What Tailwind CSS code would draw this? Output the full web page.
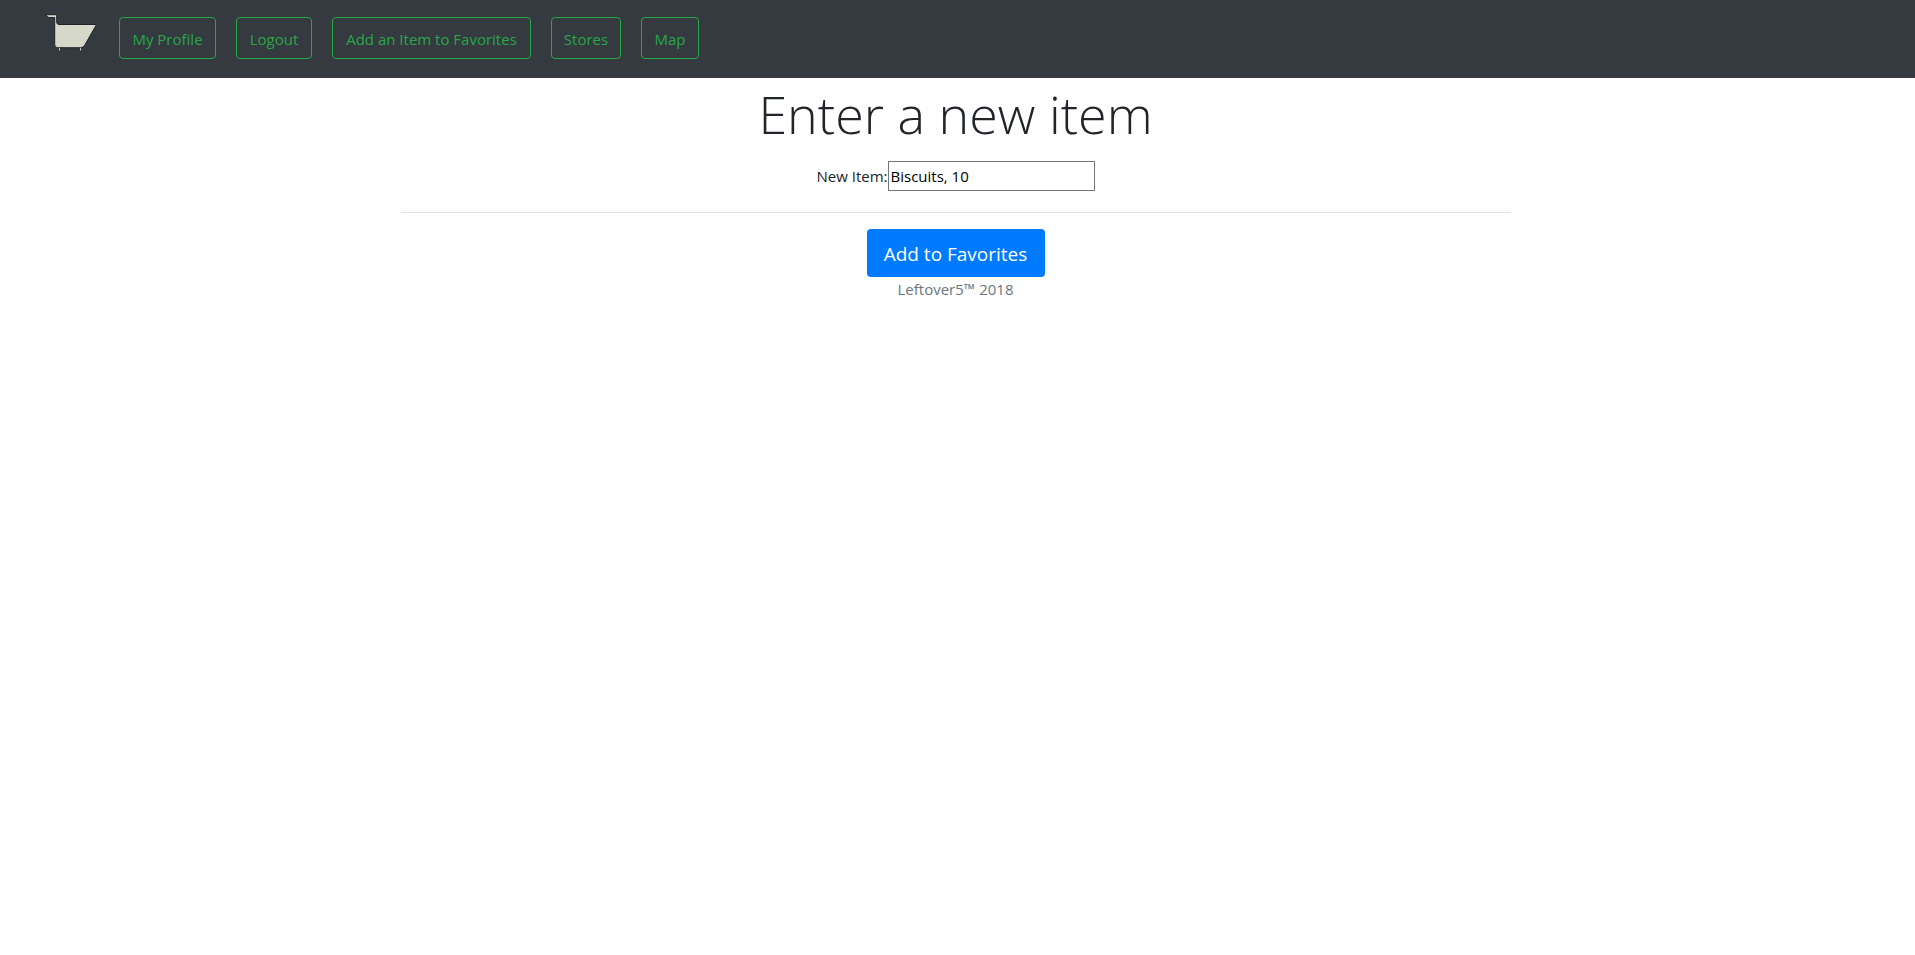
<!DOCTYPE html>
<html lang="en">
<head>
<meta charset="utf-8">
<title>Enter a new item</title>
<script src="https://cdn.jsdelivr.net/npm/@tailwindcss/browser@4"></script>
</head>
<body class="bg-white font-['Segoe_UI','Open_Sans','Noto_Sans',sans-serif] text-[15px] leading-6 text-[#212529]">
<nav class="flex h-[78px] items-start bg-[#343a40] pl-[45px] pt-[14px]">
  <a href="#" aria-label="Home" class="mr-5 block">
    <svg class="block h-10 w-[54px]" viewBox="0 0 54 40">
      <path d="M13.500 33V37H15.500V33M34.500 33V37H36.500V33" fill="#d6d8c9" stroke="#202327" stroke-width="0.800"/>
      <path d="M1 0.700H11.700V8.500Q12 10.500 14 10.500H51.500L39.500 31.500Q38 33.700 35.500 33.700H12.500Q9.700 33.700 9.700 30.500V3.500H4Q1.500 3 1 0.700Z" fill="#d6d8c9" stroke="#202327" stroke-width="1"/>
    </svg>
  </a>
  <div class="flex gap-5 pt-[3px] text-[#28a745]">
    <a href="#" class="flex h-[42px] min-w-[97px] items-center justify-center whitespace-nowrap rounded border border-[#28a745] px-2 pt-0.5">My Profile</a>
    <a href="#" class="flex h-[42px] min-w-[76px] items-center justify-center whitespace-nowrap rounded border border-[#28a745] px-2 pt-0.5">Logout</a>
    <a href="#" class="flex h-[42px] min-w-[199px] items-center justify-center whitespace-nowrap rounded border border-[#28a745] px-2 pt-0.5">Add an Item to Favorites</a>
    <a href="#" class="flex h-[42px] min-w-[70px] items-center justify-center whitespace-nowrap rounded border border-[#28a745] px-2 pt-0.5">Stores</a>
    <a href="#" class="flex h-[42px] min-w-[58px] items-center justify-center whitespace-nowrap rounded border border-[#28a745] px-2 pt-0.5">Map</a>
  </div>
</nav>
<div class="pr-1">
<main class="mx-auto max-w-[1140px] px-[15px]">
  <h1 class="text-center text-[52px] font-light leading-[71px]">Enter a new item</h1>
  <form>
    <div class="mt-3 flex items-center justify-center">
      <label for="item" class="min-w-[71px] whitespace-nowrap text-right">New Item:</label>
      <input id="item" type="text" value="Biscuits, 10" class="h-[30px] w-[207px] border border-[#767676] bg-white px-0.5 text-black">
    </div>
    <hr class="mt-[21px] mb-4 border-t border-[#e5e5e5]">
    <div class="flex justify-center">
      <button type="submit" class="h-12 min-w-[178px] whitespace-nowrap rounded bg-[#007bff] px-3 pt-0.5 text-[19px] text-white">Add to Favorites</button>
    </div>
  </form>
  <footer class="text-center text-[#6c757d]">Leftover5™ 2018</footer>
</main>
</div>
</body>
</html>
